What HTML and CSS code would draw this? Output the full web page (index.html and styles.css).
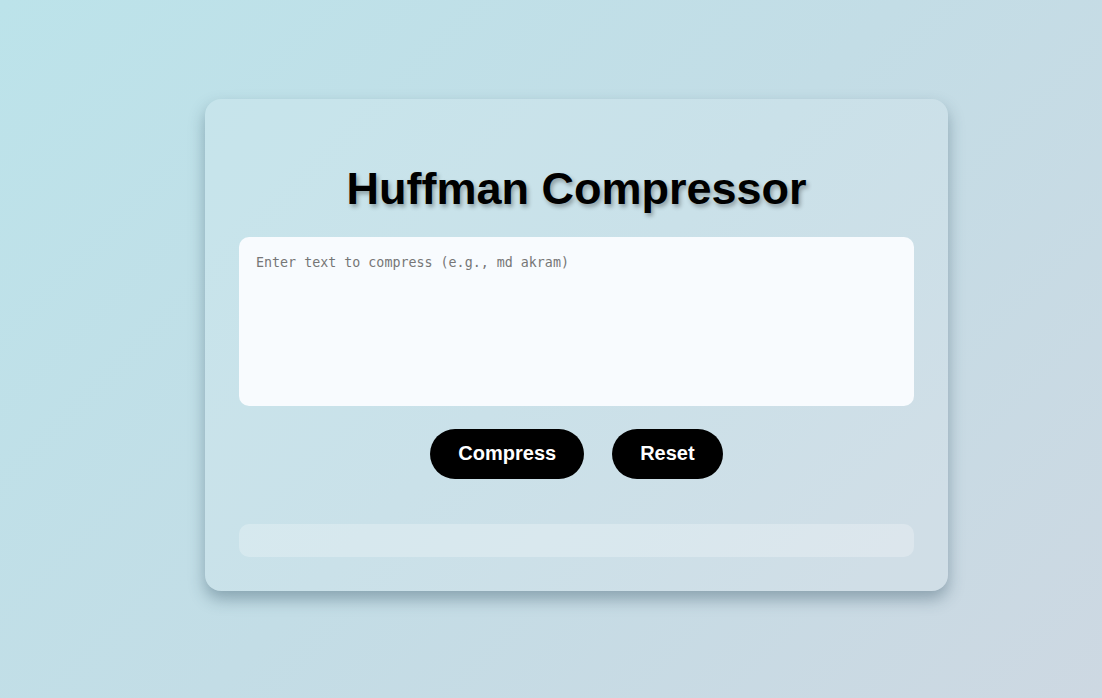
FILE: index.html
```html
<!DOCTYPE html>
<html lang="en">
<head>
<meta charset="utf-8">
<title>Huffman Compressor</title>
<link rel="stylesheet" href="styles.css">
</head>
<body>
<main class="card">
  <h1 class="title">Huffman Compressor</h1>
  <textarea class="input" placeholder="Enter text to compress (e.g., md akram)"></textarea>
  <div class="actions">
    <button class="btn">Compress</button>
    <button class="btn">Reset</button>
  </div>
  <div class="output"></div>
</main>
</body>
</html>
```
FILE: styles.css
```css
html, body {
  margin: 0;
  height: 100%;
}
body {
  background: linear-gradient(135deg, #bce3ea 0%, #c3dde6 50%, #cdd8e2 100%);
  font-family: "Liberation Sans", Arial, sans-serif;
  display: flex;
  justify-content: center;
  align-items: flex-start;
  padding: 99px 0 0 51px;
  box-sizing: border-box;
}
.card {
  width: 743px;
  box-sizing: border-box;
  padding: 34px;
  border-radius: 16px;
  background: rgba(255, 255, 255, 0.13);
  box-shadow: 0 8px 16px rgba(40, 70, 90, 0.38);
  display: flex;
  flex-direction: column;
}
.title {
  margin: 29px 0 21px;
  text-align: center;
  font-size: 45px;
  font-weight: bold;
  line-height: 54px;
  color: #000;
  text-shadow: 2px 3px 4px rgba(0, 0, 0, 0.3);
}
.input {
  display: block;
  width: 100%;
  height: 169px;
  box-sizing: border-box;
  padding: 18px 17px;
  border: none;
  border-radius: 10px;
  background: #f8fbfe;
  resize: none;
  font-family: "DejaVu Sans Mono", monospace;
  font-size: 13.333px;
  outline: none;
}
.input::placeholder {
  color: #767676;
}
.actions {
  display: flex;
  justify-content: center;
  gap: 28px;
  margin-top: 23px;
}
.btn {
  height: 50px;
  padding: 0 28px 1px;
  border: none;
  border-radius: 25px;
  background: #000;
  color: #fff;
  font-family: "Liberation Sans", Arial, sans-serif;
  font-size: 20px;
  font-weight: bold;
}
.output {
  margin-top: 45px;
  height: 33px;
  border-radius: 10px;
  background: rgba(255, 255, 255, 0.25);
}
```
